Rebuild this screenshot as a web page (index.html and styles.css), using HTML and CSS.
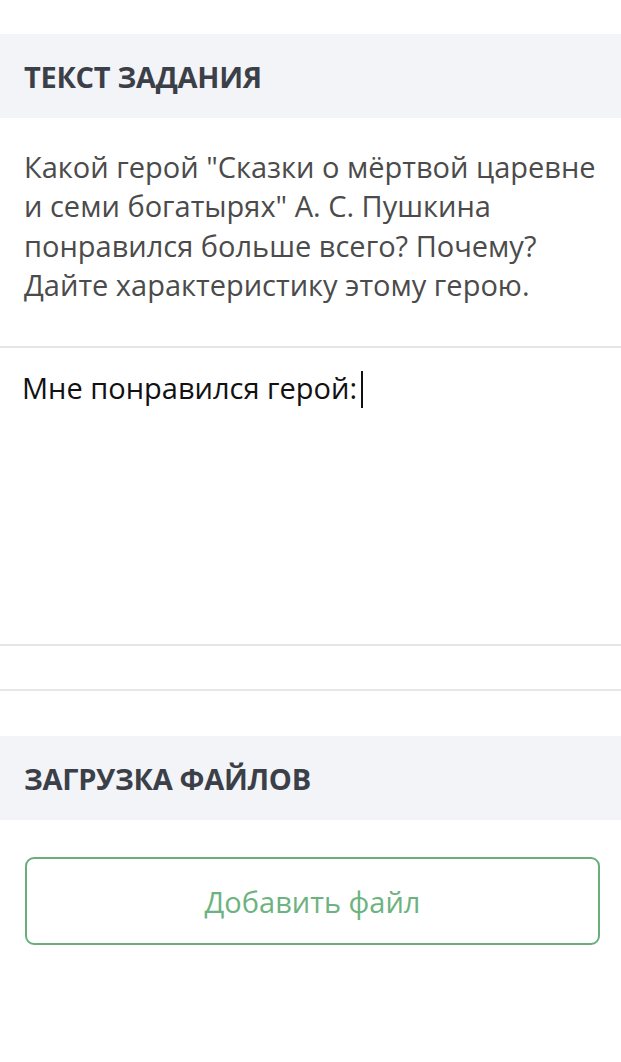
FILE: index.html
```html
<!DOCTYPE html>
<html lang="ru">
<head>
<meta charset="utf-8">
<link rel="stylesheet" href="styles.css">
</head>
<body>
<div class="page">
  <div class="top-gap"></div>
  <div class="section-head">ТЕКСТ ЗАДАНИЯ</div>
  <div class="task-text">Какой герой "Сказки о мёртвой царевне и семи богатырях" А. С. Пушкина понравился больше всего? Почему? Дайте характеристику этому герою.</div>
  <div class="answer"><span class="answer-text">Мне понравился герой:</span><span class="caret"></span></div>
  <div class="answer-footer"></div>
  <div class="section-head section-head-files">ЗАГРУЗКА ФАЙЛОВ</div>
  <div class="upload">
    <div class="add-file">Добавить файл</div>
  </div>
</div>
</body>
</html>
```
FILE: styles.css
```css
html, body {
  margin: 0;
  padding: 0;
  background: #ffffff;
}
.page {
  width: 621px;
  font-family: "Open Sans", "Noto Sans", sans-serif;
}
.top-gap {
  height: 34px;
}
.section-head {
  height: 84px;
  background: #f3f4f8;
  display: flex;
  align-items: center;
  padding-left: 24px;
  font-size: 29px;
  font-weight: 700;
  color: #3b3f48;
  letter-spacing: -0.3px;
}
.task-text {
  padding: 29px 24px 42px 24px;
  font-size: 29px;
  line-height: 39.3px;
  color: #4b4b4b;
  border-bottom: 2px solid #e6e6e6;
}
.answer {
  height: 276px;
  padding: 20px 22px 0 22px;
  font-size: 29px;
  line-height: 40px;
  color: #111111;
  border-bottom: 2px solid #e6e6e6;
  display: flex;
  align-items: flex-start;
}
.caret {
  display: inline-block;
  width: 2px;
  height: 37px;
  margin-top: 3px;
  margin-left: 4px;
  background: #111111;
}
.answer-footer {
  height: 43px;
  border-bottom: 2px solid #e6e6e6;
  margin-bottom: 45px;
}
.upload {
  padding: 37px 21px 0 25px;
}
.add-file {
  height: 84px;
  border: 2px solid #6aae7c;
  border-radius: 9px;
  display: flex;
  align-items: center;
  justify-content: center;
  font-size: 29px;
  color: #6cb37f;
}
```
